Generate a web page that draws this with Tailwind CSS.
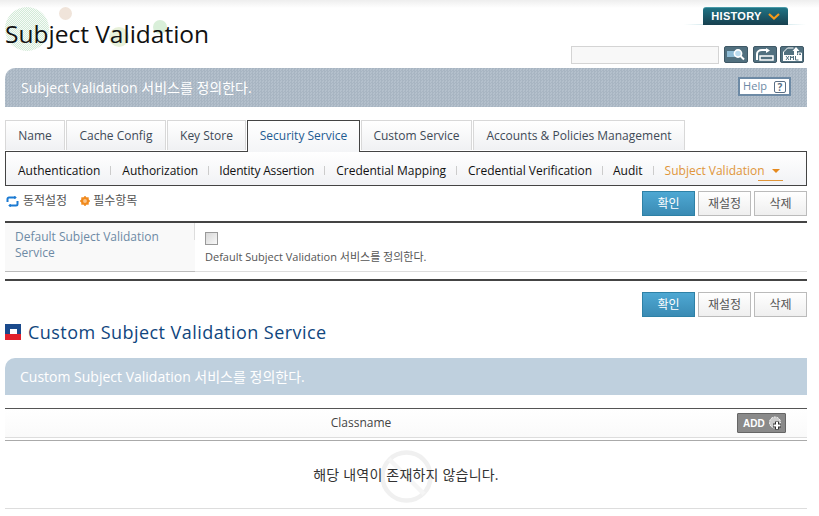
<!DOCTYPE html>
<html><head><meta charset="utf-8">
<script src="https://cdn.jsdelivr.net/npm/@tailwindcss/browser@4"></script>
</head>
<body class="w-[819px] h-[516px] overflow-hidden bg-white relative font-['Open_Sans','Noto_Sans_CJK_KR',sans-serif] text-[12px] text-[#333]">
<!-- decorative -->
<div class="absolute left-0 top-0 w-[819px] h-[8px] bg-gradient-to-b from-[#eeeeee] to-white"></div>
<div class="absolute left-[5px] top-[7px] w-[44px] h-[44px] rounded-full bg-[repeating-conic-gradient(#d2ead7_0_25%,#f6fbf7_0_50%)] bg-[length:2px_2px]"></div>
<div class="absolute left-[59px] top-[7px] w-[13px] h-[13px] rounded-full bg-[#f0e4da]"></div>
<div class="absolute left-[109px] top-[27px] w-[20px] h-[20px] rounded-full bg-[#e8f1da]"></div>
<div class="absolute left-[153px] top-[20px] w-[14px] h-[14px] rounded-full bg-[#d9efd9]"></div>
<svg class="absolute left-[379px] top-[449px]" width="55" height="55" viewBox="0 0 55 55"><circle cx="27.500" cy="27.500" r="24" fill="none" stroke="#f0f0f0" stroke-width="4.500"/><path d="M10 10L45 45" stroke="#f5f5f5" stroke-width="4.500"/></svg>

<div class="relative flex flex-col mx-[5px] w-[802px]">
  <!-- header -->
  <div class="relative h-[68px]">
    <h1 class="absolute left-0 top-[17px] text-[24.500px] leading-[34px] text-[#111]">Subject Validation</h1>
    <div class="absolute left-[679px] top-[24px] w-[122px] h-px bg-gradient-to-r from-transparent via-[#7cbcc8] to-transparent"></div>
    <div class="absolute right-[19px] top-[7px] w-[85px] h-[18px] rounded-t-[3px] bg-gradient-to-b from-[#1f7384] to-[#17404f] border-t border-[#4a9aa8] flex items-center justify-center gap-[6px] text-white font-bold text-[11px] tracking-[0.300px] font-['Liberation_Sans',sans-serif]">HISTORY
      <svg width="12" height="7" viewBox="0 0 12 7"><path d="M1 1l5 4.500L11 1" stroke="#f59a1b" stroke-width="2.200" fill="none"/></svg>
    </div>
    <div class="absolute right-[3px] top-[46px] flex items-start">
      <div class="w-[148px] h-[18px] bg-[#f8f8f8] border border-[#d4d4d4] mr-[5px]"></div>
      <div class="w-[24px] h-[17px] rounded-[2px] bg-[#51707f] border border-[#3f5866] flex items-center justify-center mr-[5px]">
        <svg width="20" height="13" viewBox="0 0 20 13"><rect x="1" y="3" width="9" height="6" fill="#8fbcd6"/><circle cx="12" cy="5.500" r="3.600" fill="#bcdcef" stroke="#fff" stroke-width="1.600"/><path d="M14.500 8l3.500 3.500" stroke="#fff" stroke-width="2"/></svg>
      </div>
      <div class="w-[24px] h-[17px] rounded-[2px] bg-[#51707f] border border-[#3f5866] flex items-center justify-center mr-[3px]">
        <svg width="20" height="14" viewBox="0 0 20 14"><path d="M2 12V6c0-2 2-4 5-4h5" stroke="#fff" stroke-width="2" fill="none"/><path d="M11 0l4 2.500-4 2.500z" fill="#fff"/><rect x="5" y="8" width="13" height="4" fill="none" stroke="#fff" stroke-width="1.500"/></svg>
      </div>
      <div class="w-[24px] h-[17px] rounded-[2px] bg-[#51707f] border border-[#3f5866] flex items-center justify-center">
        <svg width="21" height="15" viewBox="0 0 21 15"><path d="M1.500 14V5l4-4h6M16 6h3.500v8z" stroke="#fff" fill="none"/><path d="M14 0l3.500 4H15v4h-3V4H10.500z" fill="#fff"/><rect x="1.500" y="8" width="18" height="6" fill="#fff"/><path d="M4 9l3 4M7 9l-3 4M8.500 13V9l1.500 2 1.500-2v4M13.500 9v4h3" stroke="#51707f" fill="none"/></svg>
      </div>
    </div>
  </div>
  <!-- banner -->
  <div class="relative h-[39px] rounded-tl-[10px] bg-[repeating-conic-gradient(#a8b5c2_0_25%,#b4c0cc_0_50%)] bg-[length:3px_3px] flex items-center pl-[16px] text-[14px] text-white">
    Subject Validation 서비스를 정의한다.
    <div class="absolute right-[16px] top-[9px] w-[53px] h-[19px] bg-white border-[2px] border-[#6d8aa5] flex items-center justify-center gap-[7px] text-[11px] text-[#6d8aa5]">Help
      <span class="w-[12px] h-[12px] border border-[#5a6f85] rounded-[2px] flex items-center justify-center text-[10px] leading-none font-bold text-[#5a6f85]">?</span>
    </div>
  </div>
  <!-- tabs -->
  <div class="flex gap-[1px] mt-[13px] h-[31px] items-start text-[12px]">
    <div class="w-[60px] h-[30px] border border-b-0 border-[#d8d8d8] bg-gradient-to-b from-white to-[#f0f1f3] flex items-center justify-center text-[#3e4a57] font-medium">Name</div>
    <div class="w-[100px] h-[30px] border border-b-0 border-[#d8d8d8] bg-gradient-to-b from-white to-[#f0f1f3] flex items-center justify-center text-[#3e4a57] font-medium">Cache Config</div>
    <div class="w-[79px] h-[30px] border border-b-0 border-[#d8d8d8] bg-gradient-to-b from-white to-[#f0f1f3] flex items-center justify-center text-[#3e4a57] font-medium">Key Store</div>
    <div class="relative z-10 w-[113px] h-[32px] pb-[2px] border border-b-0 border-[#444] bg-gradient-to-b from-white to-[#f4f5f7] flex items-center justify-center text-[#1e5b92] font-medium">Security Service</div>
    <div class="w-[111px] h-[30px] border border-b-0 border-[#d8d8d8] bg-gradient-to-b from-white to-[#f0f1f3] flex items-center justify-center text-[#3e4a57] font-medium">Custom Service</div>
    <div class="w-[212px] h-[30px] border border-b-0 border-[#d8d8d8] bg-gradient-to-b from-white to-[#f0f1f3] flex items-center justify-center text-[#3e4a57] font-medium">Accounts &amp; Policies Management</div>
  </div>
  <!-- sub tabs -->
  <div class="h-[35px] pt-[4px] border border-[#444] bg-gradient-to-b from-white to-[#f1f2f5] flex items-center pl-[12px] text-[12px] text-[#111]">
    <span>Authentication</span><span class="w-px h-[9px] bg-[#ccc] mx-[10px]"></span>
    <span class="ml-[1px]">Authorization</span><span class="w-px h-[9px] bg-[#ccc] mx-[10px]"></span>
    <span class="tracking-[-0.170px]">Identity Assertion</span><span class="w-px h-[9px] bg-[#ccc] mx-[10px]"></span>
    <span class="ml-[1px]">Credential Mapping</span><span class="w-px h-[9px] bg-[#ccc] mx-[10px]"></span>
    <span class="ml-[1px]">Credential Verification</span><span class="w-px h-[9px] bg-[#ccc] mx-[10px]"></span>
    <span>Audit</span><span class="w-px h-[9px] bg-[#ccc] mx-[10px]"></span>
    <span class="ml-[1px] text-[#e0963a]">Subject Validation</span>
    <span class="relative ml-[7px] w-[0] h-[0] border-x-[4px] border-t-[4px] border-x-transparent border-t-[#e58a1f]"><span class="absolute -left-[18px] top-[7px] w-[25px] h-px bg-[#e0963a]"></span></span>
  </div>
  <!-- legend + buttons -->
  <div class="flex h-[35px]">
    <div class="flex items-center h-[14px] mt-[8px]">
      <svg class="ml-[1px]" width="13" height="11" viewBox="0 0 13 11"><path d="M1.500 6V3a1.500 1.500 0 0 1 1.500-1.500h7M11.500 5v3a1.500 1.500 0 0 1-1.500 1.500H3" stroke="#1b7ad2" stroke-width="2" fill="none"/><path d="M8 0l3 1.500L8 3zM5 8L2 9.500 5 11z" fill="#1b7ad2"/></svg>
      <span class="ml-[4px] text-[12px] text-[#555]">동적설정</span>
      <svg class="ml-[13px]" width="10" height="10" viewBox="0 0 10 10"><circle cx="5" cy="5" r="3" fill="#fbc58a" stroke="#f08a1e" stroke-width="2.200"/><path d="M5 0v2M5 8v2M0 5h2M8 5h2M1.500 1.500l1.500 1.500M7 7l1.500 1.500M8.500 1.500L7 3M3 7L1.500 8.500" stroke="#f08a1e" stroke-width="1.500"/></svg>
      <span class="ml-[3px] text-[12px] text-[#555]">필수항목</span>
    </div>
    <div class="ml-auto flex gap-[3px] mt-[5px] h-[25px]">
      <div class="w-[53px] h-[25px] border border-[#2e81a6] bg-gradient-to-b from-[#4ea8d3] to-[#3a8bb4] text-white flex items-center justify-center">확인</div>
      <div class="w-[53px] h-[25px] border-[1px] border-[#bbb] bg-gradient-to-b from-white to-[#efefef] text-[#555] flex items-center justify-center">재설정</div>
      <div class="w-[53px] h-[25px] border-[1px] border-[#bbb] bg-gradient-to-b from-white to-[#efefef] text-[#555] flex items-center justify-center">삭제</div>
    </div>
  </div>
  <!-- form table -->
  <div class="border-t-[2px] border-[#444] flex h-[51px] border-b border-b-[#ddd]">
    <div class="w-[190px] -mb-px bg-[#f9f9f9] border-b border-[#bbb] text-[#6d8aa5] pl-[10px] pt-[6px] leading-[16px] relative font-medium">Default Subject Validation<br>Service
      <span class="absolute right-0 top-0 w-px h-[17px] bg-[#ddd]"></span>
    </div>
    <div class="pl-[10px] pt-[9px] flex flex-col">
      <div class="w-[13px] h-[13px] border border-[#999] bg-gradient-to-br from-[#d8d8d8] to-[#f8f8f8]"></div>
      <div class="mt-[4px] text-[11px] text-[#555] leading-[16px]">Default Subject Validation 서비스를 정의한다.</div>
    </div>
  </div>
  <div class="mt-[7px] h-[2px] bg-[#444]"></div>
  <!-- lower buttons -->
  <div class="flex justify-end gap-[3px] mt-[11px]">
    <div class="w-[53px] h-[25px] border border-[#2e81a6] bg-gradient-to-b from-[#4ea8d3] to-[#3a8bb4] text-white flex items-center justify-center">확인</div>
    <div class="w-[53px] h-[25px] border-[1px] border-[#bbb] bg-gradient-to-b from-white to-[#efefef] text-[#555] flex items-center justify-center">재설정</div>
    <div class="w-[53px] h-[25px] border-[1px] border-[#bbb] bg-gradient-to-b from-white to-[#efefef] text-[#555] flex items-center justify-center">삭제</div>
  </div>
  <!-- section title -->
  <div class="flex items-center mt-[2px] h-[26px]">
    <svg class="mr-[7px] -mt-[1px] flex-none" width="16" height="16" viewBox="0 0 16 16"><rect width="16" height="16" fill="#1a4a8c"/><rect y="10" width="16" height="6" fill="#e1202c"/><rect x="5" y="5" width="7" height="5" fill="#fff"/></svg>
    <span class="text-[18px] text-[#10467e] tracking-[0.450px]">Custom Subject Validation Service</span>
  </div>
  <!-- banner 2 -->
  <div class="mt-[13px] h-[37px] rounded-tl-[10px] bg-[#bfd0de] flex items-center pl-[15px] text-[14px] text-white">Custom Subject Validation 서비스를 정의한다.</div>
  <!-- table -->
  <div class="mt-[13px] border-t border-[#555] h-[30px] border-b border-b-[#ddd] bg-gradient-to-b from-white to-[#fafafa] relative flex items-center justify-center text-[12px] text-[#444]">
    <span class="-ml-[90px]">Classname</span>
    <div class="absolute right-[21px] top-[4px] w-[49px] h-[20px] rounded-[1px] border border-[#666] bg-[#8a8a8a] flex items-center pl-[5px] gap-[2px] text-white text-[10px] font-bold font-['Liberation_Sans',sans-serif]">ADD
      <svg width="18" height="15" viewBox="0 0 18 15"><circle cx="8" cy="6.500" r="5.500" fill="#ccc" stroke="#fff" stroke-dasharray="2 1"/><path d="M10 5.500v8M6 9.500h8" stroke="#333" stroke-width="4"/><path d="M10 6v7M6.500 9.500h7" stroke="#fff" stroke-width="2"/></svg>
    </div>
  </div>
  <div class="mt-[2px] h-px bg-[#aaa]"></div>
  <div class="relative h-[68px] border-b border-[#ddd] flex items-center justify-center text-[14px] text-[#333] tracking-[0.200px]">해당 내역이 존재하지 않습니다.</div>
</div>
</body></html>
